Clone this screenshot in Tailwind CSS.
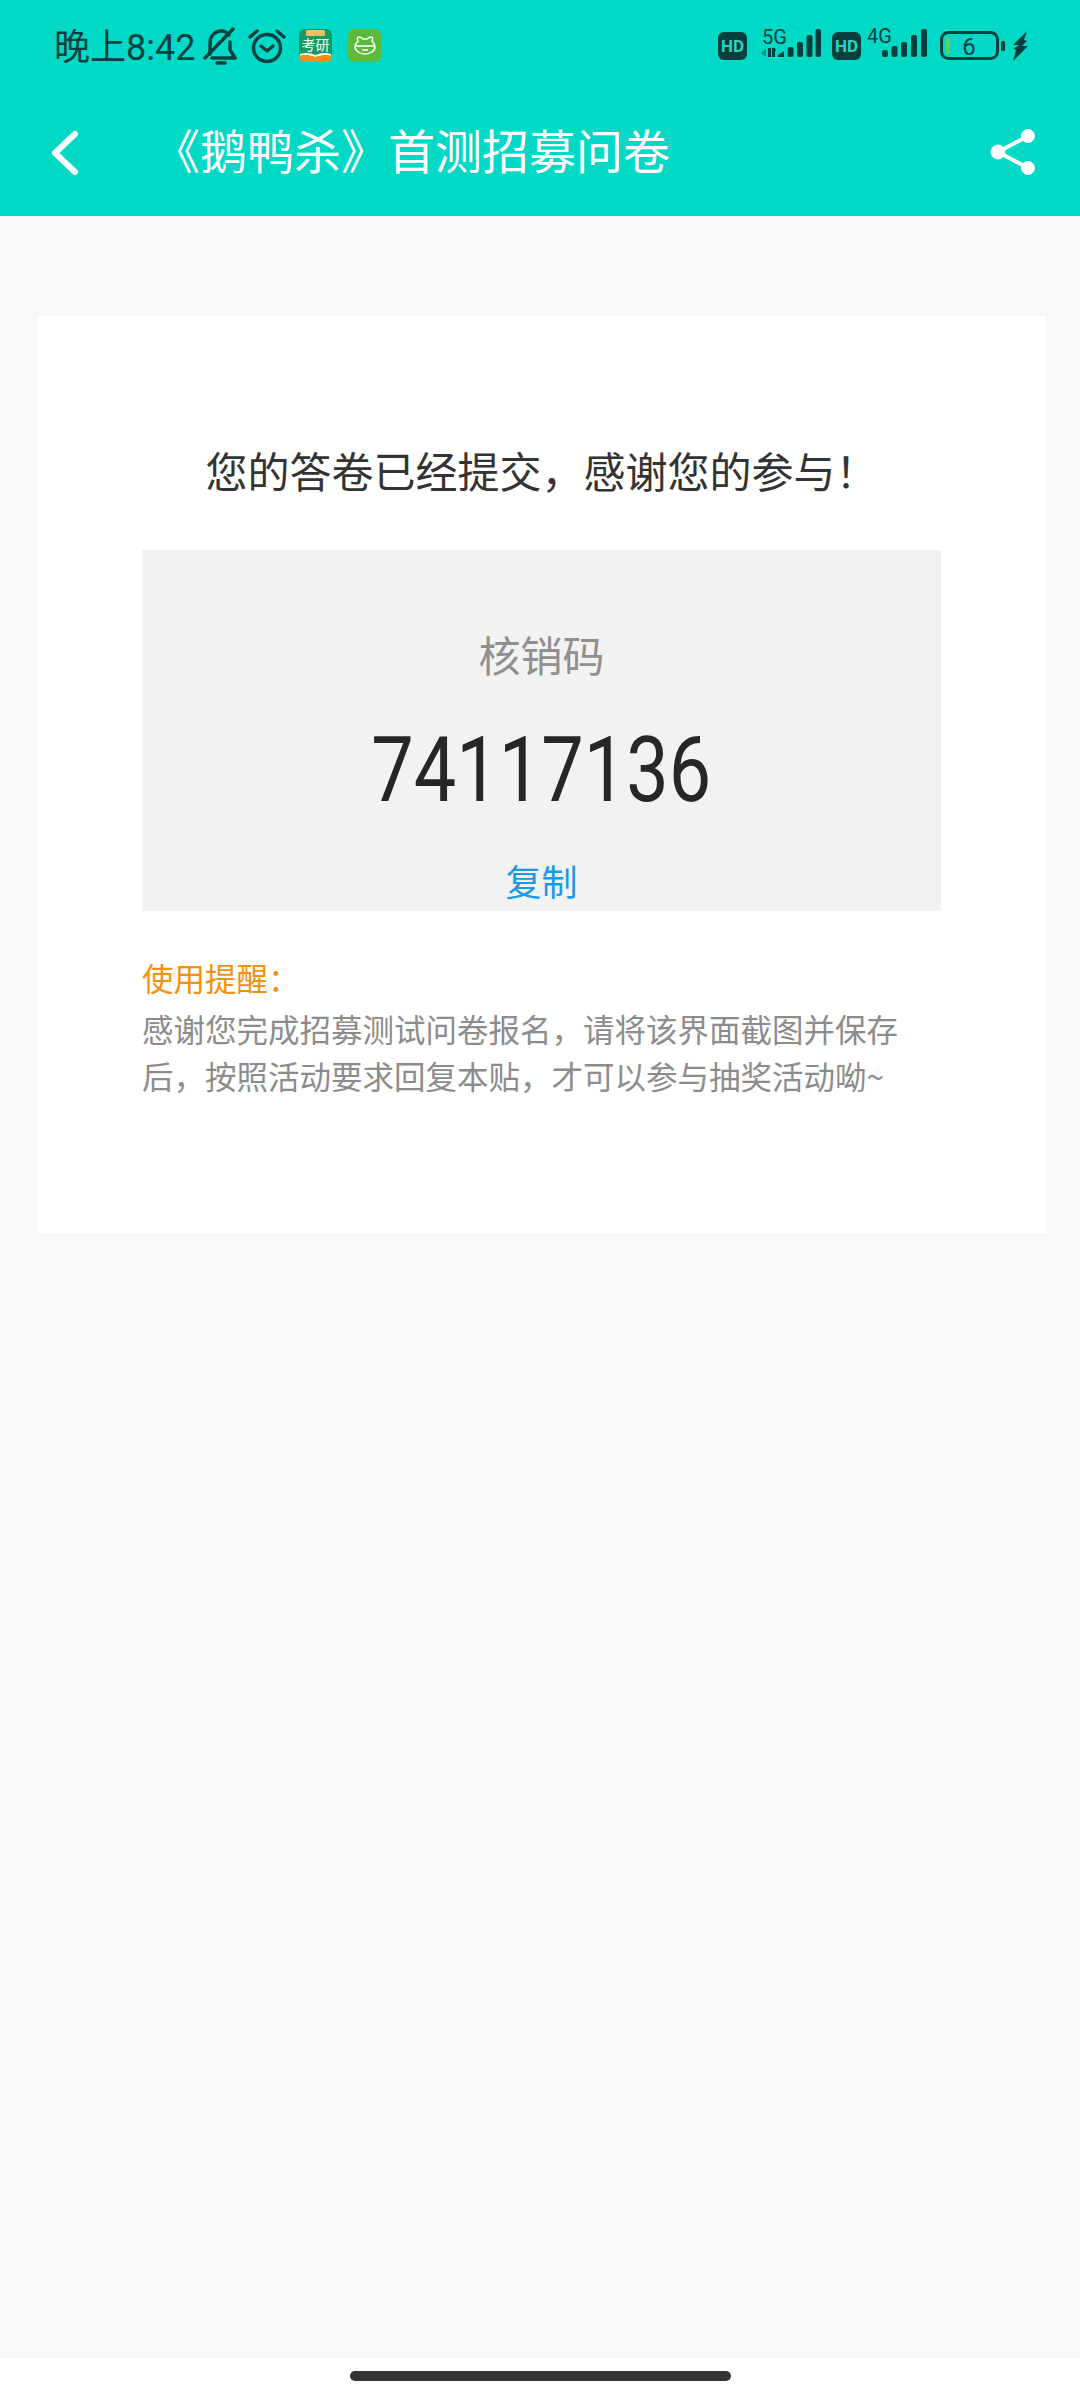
<!DOCTYPE html>
<html lang="zh-CN">
<head>
<meta charset="utf-8">
<script src="https://cdn.jsdelivr.net/npm/@tailwindcss/browser@4"></script>
<title>问卷</title>
</head>
<body class="m-0 bg-white font-['Roboto','Noto_Sans_CJK_SC',sans-serif]">
<div class="flex h-[2400px] w-[1080px] flex-col overflow-hidden">
  <header class="bg-[#00d9c6]">
    <div class="flex h-[92px] items-center justify-between pl-[54px] pr-[50px] text-[#05403f]">
      <div class="flex items-center">
        <span class="text-[36px] leading-[44px] font-['Noto_Sans_CJK_SC',sans-serif]">晚上<span class="font-['Roboto']">8:42</span></span>
        <svg class="ml-[8px]" width="34" height="38" viewBox="0 0 34 38" fill="none" stroke="#05403f" stroke-width="3.4" stroke-linecap="round" stroke-linejoin="round">
          <path d="M7 27V16C7 9 12 4 18 4c3 0 6 1 8 4"/><path d="M27 15v8l5 8H9"/><path d="M2 31 30 2"/><path d="M14 36h8"/>
        </svg>
        <svg class="ml-[10px]" width="40" height="36" viewBox="0 0 40 36" fill="none" stroke="#05403f" stroke-width="3.4" stroke-linecap="round" stroke-linejoin="round">
          <circle cx="20" cy="20" r="13.5"/><path d="M14 18l6 5 6-5"/><path d="M3 9l7-6"/><path d="M37 9l-7-6"/>
        </svg>
        <svg class="ml-[12px]" width="34" height="34" viewBox="0 0 34 34">
          <rect width="33" height="33" rx="6" fill="#169a63"/>
          <path d="M0 26h33v1a6 6 0 0 1-6 6H6a6 6 0 0 1-6-6z" fill="#f0921a"/>
          <rect x="7" y="1" width="19" height="6" rx="1.5" fill="#e9c45d"/>
          <path d="M1 25c6-2 11-1 15.500 1 5-2 10-3 15.500-1v1.500c-6-1-10-.5-15.500 1.500C11 26 6 25.500 1 26.500z" fill="#fff"/>
          <text x="16.500" y="21" text-anchor="middle" font-size="14" fill="#fff" font-family="Noto Sans CJK SC">考研</text>
        </svg>
        <svg class="ml-[15px]" width="34" height="34" viewBox="0 0 34 34" fill="none" stroke="#fff" stroke-width="1.500">
          <rect width="33" height="33" rx="6" fill="#5cba3c" stroke="none"/>
          <path d="M10 12c-1-2-1-4 1-4s3 1 4 2h4c1-1 2-2 4-2s2 2 1 4c2 2 3 4 3 6 0 4-5 7-10 7s-10-3-10-7c0-2 1-4 3-6z"/>
          <path d="M7 17h20"/><path d="M14 21h6"/>
        </svg>
      </div>
      <div class="flex items-center">
        <svg width="29" height="28" viewBox="0 0 29 28"><rect width="29" height="28" rx="6" fill="#05403f"/><text x="14.500" y="20" text-anchor="middle" font-size="17" font-weight="700" fill="#2fd2c2" font-family="Roboto">HD</text></svg>
        <svg class="ml-[14px] mb-[6px]" width="60" height="40" viewBox="0 -6 60 40" fill="#05403f">
          <text x="1" y="14.500" font-size="20" font-family="Roboto">5G</text>
          <path d="M0 24l5-4v8z" opacity=".5"/>
          <rect x="7" y="19" width="3" height="9"/>
          <path d="M11 19h3l1 3h-4z"/><rect x="11" y="22" width="3" height="6"/>
          <path d="M17 26 23 22v6h-6z"/>
          <rect x="26.500" y="18" width="6" height="10" rx="2"/><rect x="36" y="13" width="6" height="15" rx="2"/><rect x="45.500" y="6" width="6" height="22" rx="2"/><rect x="54.500" y="0" width="5.500" height="28" rx="2"/>
        </svg>
        <svg class="ml-[11px]" width="29" height="28" viewBox="0 0 29 28"><rect width="29" height="28" rx="6" fill="#05403f"/><text x="14.500" y="20" text-anchor="middle" font-size="17" font-weight="700" fill="#2fd2c2" font-family="Roboto">HD</text></svg>
        <svg class="ml-[6px] mb-[6px]" width="60" height="40" viewBox="0 -6 60 40" fill="#05403f">
          <text x="0" y="14" font-size="20" font-family="Roboto">4G</text>
          <rect x="15" y="21" width="6" height="7" rx="2"/><rect x="24.500" y="17" width="6" height="11" rx="2"/><rect x="34" y="13" width="6" height="15" rx="2"/><rect x="44" y="6" width="6" height="22" rx="2"/><rect x="54" y="0" width="6" height="28" rx="2"/>
        </svg>
        <svg class="ml-[13px]" width="90" height="30" viewBox="0 0 90 30" fill="none">
          <rect x="1.500" y="1.500" width="56" height="26" rx="7" stroke="#05403f" stroke-width="3"/>
          <rect x="6" y="7" width="4" height="16" fill="#5fcf5b"/>
          <text x="29" y="24" text-anchor="middle" font-size="24" fill="#05403f" font-family="Roboto">6</text>
          <rect x="61" y="10" width="4" height="10" rx="1.500" fill="#05403f"/>
          <path d="M87 0 73 14h6l-6 4 3 1-3 11 15-15h-6l5-5-3-1z" fill="#05403f"/>
        </svg>
      </div>
    </div>
    <nav class="flex h-[124px] items-center pl-[50px] pr-[44px] pb-[4px] text-white">
      <svg class="mt-[2px]" width="30" height="46" viewBox="0 0 30 46" fill="none" stroke="#fff" stroke-width="6" stroke-linecap="round" stroke-linejoin="round"><path d="M25 4 5 23l20 19"/></svg>
      <h1 class="mb-[6px] ml-[73px] flex-1 text-[47px] leading-[60px] font-normal font-['Noto_Sans_CJK_SC',sans-serif]">《鹅鸭杀》首测招募问卷</h1>
      <svg class="ml-[-1px]" width="46" height="46" viewBox="0 0 46 46" fill="#fff" stroke="#fff"><path d="M38 7 8 23l30 16" fill="none" stroke-width="4"/><circle cx="38" cy="7" r="6.500"/><circle cx="8" cy="23" r="7"/><circle cx="38" cy="39" r="6.500"/></svg>
    </nav>
  </header>
  <main class="flex-1 bg-[#f7f7f7] px-[37px] pt-[100px] font-['Noto_Sans_CJK_SC',sans-serif]">
    <section class="h-[917px] w-[1009px] bg-white pt-[124px]">
      <p class="text-center text-[42px] leading-[60px] text-[#333333]">您的答卷已经提交，感谢您的参与！</p>
      <div class="mx-[105px] mt-[50px] flex h-[361px] flex-col items-center bg-[#f2f2f2] pt-[74px]">
        <p class="text-[42px] leading-[60px] text-[#8f8f8f]">核销码</p>
        <p class="mt-[37px] scale-x-[.84] text-[90px] font-[450] leading-[100px] text-[#262626] font-['Roboto']">74117136</p>
        <p class="mt-[34px] text-[36px] leading-[50px] text-[#1a9ae6]">复制</p>
      </div>
      <div class="mx-[105px] mt-[43px]">
        <p class="text-[31.5px] leading-[46px] text-[#f0920f]">使用提醒：</p>
        <p class="mt-[5px] pr-[20px] text-[31.5px] leading-[47px] text-[#8c8c8c]">感谢您完成招募测试问卷报名，请将该界面截图并保存后，按照活动要求回复本贴，才可以参与抽奖活动呦~</p>
      </div>
    </section>
  </main>
  <footer class="flex h-[42px] items-start justify-center bg-white pt-[13px]">
    <div class="h-[10px] w-[381px] rounded-full bg-[#333333]"></div>
  </footer>
</div>
</body>
</html>
